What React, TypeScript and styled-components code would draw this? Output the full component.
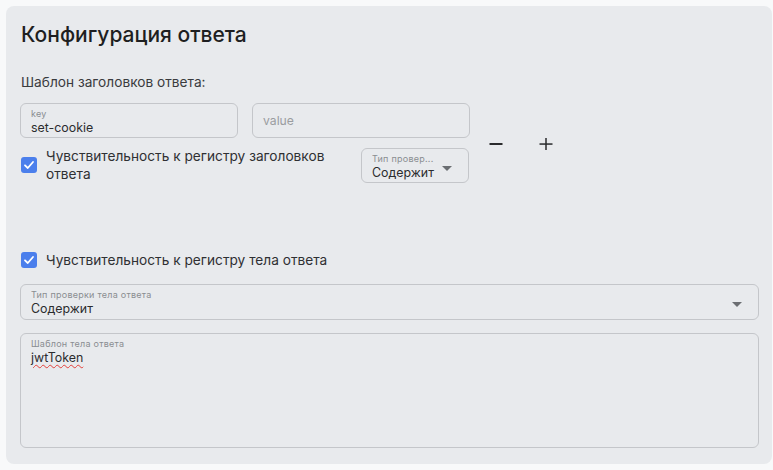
import React from "react";
import styled, { createGlobalStyle } from "styled-components";

const Global = createGlobalStyle`
  html, body { margin: 0; padding: 0; background: #f8f9fa; }
  body { font-family: Inter, "Noto Sans", sans-serif; color: #2a2b2d; }
  * { box-sizing: border-box; }
`;

const Page = styled.div`
  padding: 6px 1px 6px 6px;
`;

const Card = styled.section`
  background: #e8eaed;
  border-radius: 8px;
  height: 458px;
  padding: 16px 14px 15px 14px;
  display: flex;
  flex-direction: column;
`;

const Title = styled.h2`
  margin: 0 0 0 1px;
  font-size: 21px;
  line-height: 25px;
  font-weight: 500;
  color: #1e1f21;
`;

const Subtitle = styled.div`
  margin: 27px 0 0 1px;
  font-size: 13.7px;
  line-height: 16px;
  color: #3a3b3e;
`;

const HeaderBlock = styled.div`
  margin-top: 13px;
  display: flex;
  align-items: center;
`;

const HeaderRows = styled.div`
  width: 449px;
  display: flex;
  flex-direction: column;
  gap: 9px;
`;

const FieldPair = styled.div`
  display: grid;
  grid-template-columns: 218px 218px;
  gap: 14px;
`;

const Field = styled.div<{ $h: number; $w?: number }>`
  height: ${(p) => p.$h}px;
  ${(p) => (p.$w ? `width: ${p.$w}px; flex: none;` : "")}
  border: 1px solid #c4c6ca;
  border-radius: 6px;
  padding: 5px 10px 0 10px;
  display: flex;
  flex-direction: column;
  gap: 1px;
`;

const SmallLabel = styled.span`
  font-size: 9px;
  line-height: 10px;
  letter-spacing: 0.25px;
  color: #8a8d91;
  white-space: nowrap;
  overflow: hidden;
  text-overflow: ellipsis;
`;

const Value = styled.span`
  font-size: 12.4px;
  line-height: 16px;
  color: #2b2c2e;
`;

const Placeholder = styled.span`
  margin: auto 0;
  padding-bottom: 5px;
  font-size: 12.2px;
  line-height: 16px;
  color: #9a9ca0;
`;

const CheckRow = styled.div`
  display: flex;
  align-items: center;
  justify-content: space-between;
`;

const CheckLabel = styled.label<{ $maxW?: number }>`
  display: flex;
  align-items: center;
  gap: 9px;
  padding-left: 1px;
  font-size: 13.7px;
  line-height: 18px;
  color: #2f3033;
  ${(p) => (p.$maxW ? `max-width: ${p.$maxW}px;` : "")}
`;

const Box = styled.span`
  flex: none;
  width: 16px;
  height: 16px;
  border-radius: 3px;
  background: #4b7fec;
  display: flex;
  align-items: center;
  justify-content: center;
`;

const SelectBody = styled.div`
  display: flex;
  align-items: center;
  justify-content: space-between;
`;

const Caret = styled.span`
  width: 0;
  height: 0;
  border-left: 5px solid transparent;
  border-right: 5px solid transparent;
  border-top: 5px solid #6b6e72;
  margin: -9px 6px 0 0;
`;

const Actions = styled.div`
  display: flex;
  align-items: center;
  gap: 36px;
  margin-left: 20px;
  margin-top: 2px;
`;

const IconBtn = styled.button`
  border: 0;
  background: none;
  padding: 0;
  width: 14px;
  height: 14px;
  display: flex;
  align-items: center;
  justify-content: center;
  cursor: pointer;
`;

const Spacer = styled.div`
  height: 58px;
`;

const BodyCheck = styled.div`
  margin-top: 10px;
`;

const BodySection = styled.div`
  margin-top: 15px;
  display: flex;
  flex-direction: column;
  gap: 13px;
  width: 739px;
`;

const Squiggle = styled.span`
  text-decoration: underline wavy #e2403a;
  text-decoration-thickness: 1px;
  text-underline-offset: 2px;
`;

const Check = () => (
  <Box>
    <svg width="12" height="12" viewBox="0 0 12 12">
      <path d="M2 6.3 L4.8 9 L10 3" fill="none" stroke="#fff" strokeWidth="1.8" strokeLinecap="round" strokeLinejoin="round" />
    </svg>
  </Box>
);

export default function App() {
  return (
    <Page>
      <Global />
      <Card>
        <Title>Конфигурация ответа</Title>
        <Subtitle>Шаблон заголовков ответа:</Subtitle>
        <HeaderBlock>
          <HeaderRows>
            <FieldPair>
              <Field $h={35}>
                <SmallLabel>key</SmallLabel>
                <Value>set-cookie</Value>
              </Field>
              <Field $h={35}>
                <Placeholder>value</Placeholder>
              </Field>
            </FieldPair>
            <CheckRow>
              <CheckLabel $maxW={320}>
                <Check />
                <span>Чувствительность к регистру заголовков ответа</span>
              </CheckLabel>
              <Field $h={35} $w={108}>
                <SmallLabel>Тип провер...</SmallLabel>
                <SelectBody>
                  <Value>Содержит</Value>
                  <Caret />
                </SelectBody>
              </Field>
            </CheckRow>
          </HeaderRows>
          <Actions>
            <IconBtn aria-label="remove">
              <svg width="14" height="14" viewBox="0 0 14 14">
                <rect x="0.5" y="6" width="13" height="2" fill="#2a2b2d" />
              </svg>
            </IconBtn>
            <IconBtn aria-label="add">
              <svg width="14" height="14" viewBox="0 0 14 14">
                <rect x="0.5" y="6.3" width="13" height="1.5" fill="#2a2b2d" />
                <rect x="6.25" y="1" width="1.5" height="12" fill="#2a2b2d" />
              </svg>
            </IconBtn>
          </Actions>
        </HeaderBlock>
        <Spacer />
        <BodyCheck>
          <CheckLabel>
            <Check />
            <span>Чувствительность к регистру тела ответа</span>
          </CheckLabel>
        </BodyCheck>
        <BodySection>
          <Field $h={36}>
            <SmallLabel>Тип проверки тела ответа</SmallLabel>
            <SelectBody>
              <Value>Содержит</Value>
              <Caret />
            </SelectBody>
          </Field>
          <Field $h={115}>
            <SmallLabel>Шаблон тела ответа</SmallLabel>
            <Value>
              <Squiggle>jwtToken</Squiggle>
            </Value>
          </Field>
        </BodySection>
      </Card>
    </Page>
  );
}
